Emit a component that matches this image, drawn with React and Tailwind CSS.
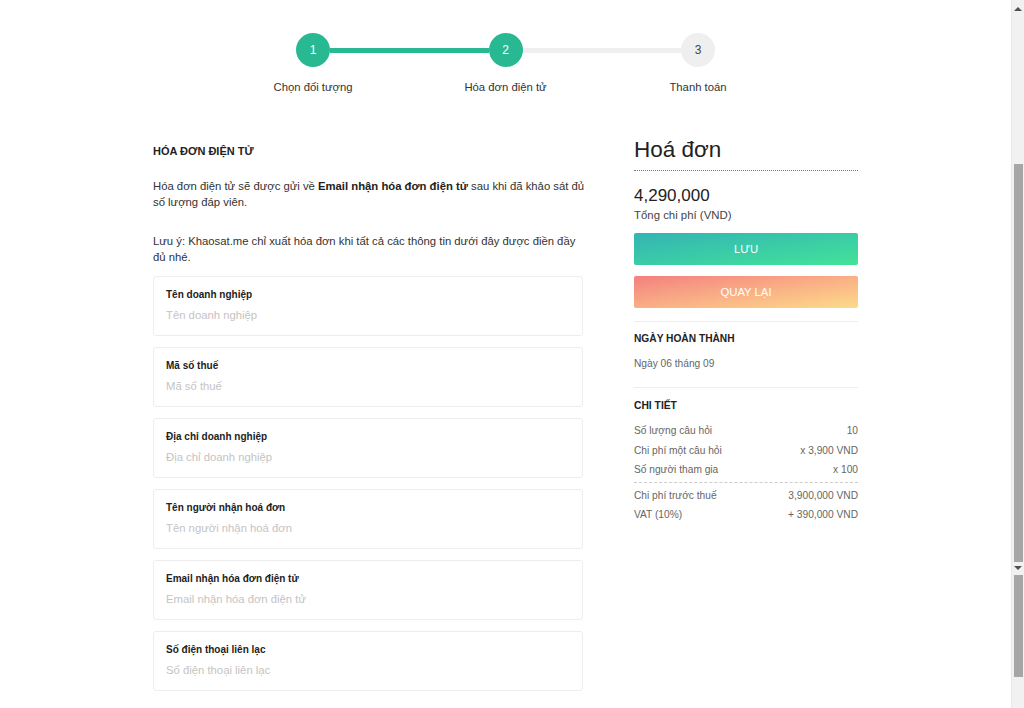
import React from 'react';

const steps = [
  { n: 1, label: 'Chọn đối tượng', done: true },
  { n: 2, label: 'Hóa đơn điện tử', done: true },
  { n: 3, label: 'Thanh toán', done: false },
];

const fields = [
  'Tên doanh nghiệp',
  'Mã số thuế',
  'Địa chỉ doanh nghiệp',
  'Tên người nhận hoá đơn',
  'Email nhận hóa đơn điện tử',
  'Số điện thoại liên lạc',
];

function Stepper() {
  return (
    <div className="w-[419px] mx-auto pt-[33px]">
      <div className="flex items-center">
        <div className="w-[34px] h-[34px] rounded-full bg-[#28b993] text-white text-[12px] flex items-center justify-center shrink-0">1</div>
        <div className="flex-1 h-[5px] bg-[#28b993]" />
        <div className="w-[34px] h-[34px] rounded-full bg-[#28b993] text-white text-[12px] flex items-center justify-center shrink-0">2</div>
        <div className="flex-1 h-[5px] bg-[#efefef]" />
        <div className="w-[34px] h-[34px] rounded-full bg-[#efefef] text-[#444] text-[12px] flex items-center justify-center shrink-0">3</div>
      </div>
      <div className="flex justify-between mt-[12px]">
        {steps.map((s) => (
          <div key={s.n} className="w-[34px] flex justify-center">
            <span className="whitespace-nowrap text-[11.3px] leading-[16px] text-[#333]">{s.label}</span>
          </div>
        ))}
      </div>
    </div>
  );
}

function Field({ label }) {
  return (
    <div className="border border-[#ededed] rounded-[3px] h-[60px] px-[12px] pt-[11px]">
      <div className="text-[10px] leading-[14px] font-bold text-[#222]">{label}</div>
      <input
        placeholder={label}
        className="w-full mt-[5px] text-[11.3px] leading-[16px] text-[#333] placeholder:text-[#c4c4c4] outline-none bg-transparent"
      />
    </div>
  );
}

function Row({ left, right }) {
  return (
    <div className="flex justify-between text-[10.2px] leading-[19.5px] text-[#666]">
      <span>{left}</span>
      <span>{right}</span>
    </div>
  );
}

function Scrollbar() {
  return (
    <div className="w-[13px] h-full bg-[#f1f1f1] border-l border-[#e8e8e8] flex flex-col items-center shrink-0">
      <div className="h-[11px] flex items-end">
        <div className="w-0 h-0 border-l-[4px] border-r-[4px] border-b-[4px] border-l-transparent border-r-transparent border-b-[#505050]" />
      </div>
      <div className="h-[153px]" />
      <div className="w-[9px] h-[398px] bg-[#a6a6a6]" />
      <div className="h-[12px] flex items-center">
        <div className="w-0 h-0 border-l-[4px] border-r-[4px] border-t-[4px] border-l-transparent border-r-transparent border-t-[#505050]" />
      </div>
      <div className="w-[9px] h-[102px] mt-[1px] bg-[#a6a6a6]" />
    </div>
  );
}

export default function App() {
  return (
    <div className="h-[708px] w-full flex overflow-hidden bg-white text-[#333]" style={{ fontFamily: '"Liberation Sans", Arial, sans-serif' }}>
      <div className="flex-1 min-w-0">
        <Stepper />

        <div className="w-[705px] mx-auto mt-[35px] flex gap-[51px]">
          <div className="w-[430px] shrink-0">
            <h3 className="text-[11px] leading-[16px] font-bold text-[#222] mt-[13px]">HÓA ĐƠN ĐIỆN TỬ</h3>
            <p className="text-[11.3px] leading-[16px] mt-[19px] mr-[-6px]">
              Hóa đơn điện tử sẽ được gửi về <b className="text-[#222]">Email nhận hóa đơn điện tử</b> sau khi đã khảo sát đủ số lượng đáp viên.
            </p>
            <p className="text-[11.3px] leading-[16px] mt-[23px]">
              Lưu ý: Khaosat.me chỉ xuất hóa đơn khi tất cả các thông tin dưới đây được điền đầy đủ nhé.
            </p>
            <div className="mt-[11px] flex flex-col gap-[11px]">
              {fields.map((f) => (
                <Field key={f} label={f} />
              ))}
            </div>
          </div>

          <div className="w-[224px] shrink-0">
            <h2 className="text-[22.5px] leading-[32px] text-[#222] mt-[4px] pb-[4px] border-b border-dotted border-[#777]">Hoá đơn</h2>
            <div className="text-[17px] leading-[24px] text-[#222] mt-[13px]">4,290,000</div>
            <div className="text-[11.4px] leading-[16px] text-[#444] mt-[-1px]">Tổng chi phí (VND)</div>
            <button className="w-full h-[32px] mt-[10px] rounded-[2px] text-white text-[11.3px] bg-gradient-to-br from-[#35b3b4] to-[#43e396]">LƯU</button>
            <button className="w-full h-[32px] mt-[11px] rounded-[2px] text-white text-[11.3px] bg-gradient-to-br from-[#f2807f] to-[#fcdb8a]">QUAY LẠI</button>

            <div className="border-t border-[#eee] mt-[13px] pt-[9px]">
              <div className="text-[10.2px] leading-[16px] font-bold text-[#222]">NGÀY HOÀN THÀNH</div>
              <div className="text-[10.2px] leading-[16px] text-[#666] mt-[9px]">Ngày 06 tháng 09</div>
            </div>

            <div className="border-t border-[#eee] mt-[15px] pt-[10px]">
              <div className="text-[10.3px] leading-[16px] font-bold text-[#222]">CHI TIẾT</div>
              <div className="mt-[7px]">
                <Row left="Số lượng câu hỏi" right="10" />
                <Row left="Chi phí một câu hỏi" right="x 3,900 VND" />
                <Row left="Số người tham gia" right="x 100" />
              </div>
              <div className="border-t border-dashed border-[#ccc] mt-[2px] pt-[3px]">
                <Row left="Chi phí trước thuế" right="3,900,000 VND" />
                <Row left="VAT (10%)" right="+ 390,000 VND" />
              </div>
            </div>
          </div>
        </div>
      </div>
      <Scrollbar />
    </div>
  );
}
